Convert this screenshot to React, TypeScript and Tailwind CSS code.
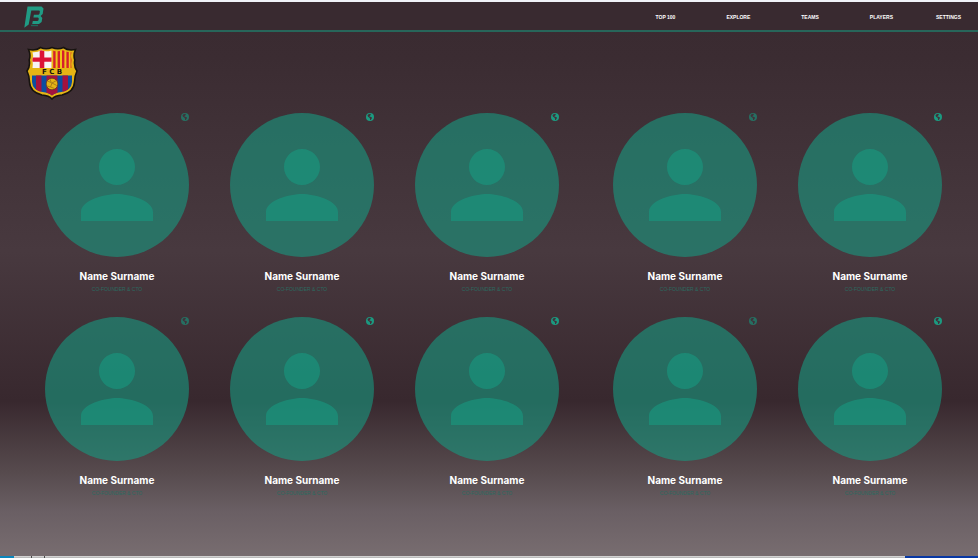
import React from "react";

const links = ["TOP 100", "EXPLORE", "TEAMS", "PLAYERS", "SETTINGS"];

type Player = { name: string; role: string; online: boolean };

const player = (online: boolean): Player => ({
  name: "Name Surname",
  role: "CO-FOUNDER & CTO",
  online,
});

const rows: Player[][][] = [
  [
    [player(false), player(true), player(true)],
    [player(false), player(true)],
  ],
  [
    [player(false), player(true), player(true)],
    [player(false), player(true)],
  ],
];

function Logo() {
  return (
    <svg viewBox="0 0 20 22" className="h-[22px] w-5" role="img" aria-label="Home">
      <path
        fill="#209b84"
        d="M3.5 0.5H17.5L19.5 2.5L18.7 8L16.6 10L18.3 12L17.6 16L15 18H8.2L8.8 15H13.6L14.5 14.2L14.8 12.4L14 11.6H9.4L9.9 8.7H14.6L15.5 7.8L15.9 5.2L15.2 4.4H7.3L4.7 18.6L0.3 21.7Z"
      />
      <path fill="#1f6659" d="M7 18.8H14V20.2H7Z" />
    </svg>
  );
}

function Crest() {
  const outline =
    "M2.5 3.5Q10 5 14.5 1.5Q20 4 26 1.5Q32 4 37.5 1.5Q42 5 49.5 3.5Q47 9 48.8 14Q47.5 20 51 25Q48.5 30 48.5 36Q48 46 36 49Q29 49.5 26 53Q23 49.5 16 49Q4 46 3.5 36Q3.5 30 1 25Q4.5 20 3.2 14Q5 9 2.5 3.5Z";
  return (
    <svg viewBox="0 0 52 54" className="h-[54px] w-[52px]" role="img" aria-label="FCB">
      <defs>
        <clipPath id="crest-cross">
          <path d="M6.5 6.2Q12 6.5 15 4.2Q20 6.2 25.5 4.4V22H6.5Q7.2 18 6.4 14Q8 10 6.5 6.2Z" />
        </clipPath>
        <clipPath id="crest-bars">
          <path d="M26.5 4.4Q32 6.2 37 4.2Q41 6.5 45.5 6.2Q44 10 45.6 14Q44.8 18 45.5 22H26.5Z" />
        </clipPath>
        <clipPath id="crest-base">
          <path d="M6 29.5H46V36Q45.5 44 35.5 46Q29 46.5 26 49.5Q23 46.5 16.5 46Q6.5 44 6 36Z" />
        </clipPath>
      </defs>
      <path d={outline} fill="#e5b414" stroke="#17130f" strokeWidth="1.6" />
      <g clipPath="url(#crest-cross)">
        <path fill="#f7f4f5" d="M5 3H26V22H5Z" />
        <path fill="#dc1236" d="M13.7 3H18.3V22H13.7ZM5 11.5H26V15.8H5Z" />
      </g>
      <g clipPath="url(#crest-bars)">
        <path fill="#f0c419" d="M26 3H47V22H26Z" />
        <path fill="#d5202c" d="M27.2 3H29.6V22H27.2ZM31.6 3H34V22H31.6ZM36 3H38.4V22H36ZM40.4 3H42.8V22H40.4ZM44.6 3H47V22H44.6Z" />
      </g>
      <g clipPath="url(#crest-base)">
        <path fill="#0c4da0" d="M5 29H47V51H5Z" />
        <path fill="#a4123f" d="M10 29H15.5V51H10ZM20.5 29H31.5V51H20.5ZM36.5 29H42V51H36.5Z" />
      </g>
      <circle cx="26" cy="38" r="5.8" fill="#e5b414" stroke="#5b3a1c" strokeWidth="0.7" />
      <path fill="none" stroke="#9a7018" strokeWidth="0.8" d="M21.5 35L26 37L30.5 34.5M26 37L24.5 41L28.5 42.5M24.5 41L21 40M26 37L30.8 39.5M24 33.2L25 36" />
      <text x="26" y="27.8" textAnchor="middle" fontSize="7" fontWeight="700" fill="#17130f" fontFamily="'DejaVu Sans', sans-serif">
        F C B
      </text>
    </svg>
  );
}

function Globe({ online }: { online: boolean }) {
  return (
    <svg
      viewBox="0 0 16 16"
      aria-hidden="true"
      className={online ? "absolute top-0 right-0 size-2 text-[#1b9a80]" : "absolute top-0 right-0 size-2 text-[#266f62]"}
    >
      <circle cx="8" cy="8" r="8" fill="currentColor" />
      <path fill="#41323a" d="M4 3L8 1.5L10 3L8 5.5L6.5 7L9 7.5L12 9L11.5 11L9.5 14L8 14L8 11L6.5 9L4 7.5L3 5Z" />
    </svg>
  );
}

function PlayerCard({ name, role, online }: Player) {
  return (
    <article className="relative flex w-36 flex-col items-center">
      <div className="flex size-36 items-center justify-center rounded-full bg-[#179980]/60">
        <svg viewBox="0 0 24 24" className="size-[108px] fill-[#179980]/60" aria-hidden="true">
          <path d="M12 12c2.21 0 4-1.79 4-4s-1.79-4-4-4-4 1.79-4 4 1.79 4 4 4zm0 2c-2.67 0-8 1.34-8 4v2h16v-2c0-2.66-5.33-4-8-4z" />
        </svg>
      </div>
      <Globe online={online} />
      <h2 className="mt-[11px] font-['Inter',sans-serif] text-[10px] leading-4 font-bold text-white">{name}</h2>
      <p className="text-[5px] leading-[10px] text-[#2b6a60]">{role}</p>
    </article>
  );
}

export default function App() {
  return (
    <div className="flex min-h-screen flex-col bg-[#38292f] font-['Liberation_Sans',Arial,sans-serif]">
      <div className="h-0.5 bg-[#f1f3f8]" />
      <div className="flex grow flex-col bg-[linear-gradient(to_bottom,#392a30_0%,#3b2c32_10%,#48393f_45%,#38282e_72%,#574b4e_85%,#6a5f64_92%,#786d70_100%)]">
        <header className="flex h-[30px] items-center justify-between border-b-2 border-[#27665a] bg-[#392a30] pt-0.5 pr-[17px] pl-6">
          <a href="#home">
            <Logo />
          </a>
          <nav className="flex gap-[51px] text-[5px] leading-[10px] font-bold text-white">
            {links.map((label) => (
              <a key={label} href={"#" + label.toLowerCase().replace(" ", "-")} className="last:-ml-2">
                {label}
              </a>
            ))}
          </nav>
        </header>
        <main className="grow">
          <div className="px-[26px] pt-3.5">
            <Crest />
          </div>
          <div className="flex flex-col gap-[23px] pt-[13px] pr-9 pb-6 pl-[45px]">
            {rows.map((groups, r) => (
              <section key={r} className="flex flex-wrap justify-between gap-y-6">
                {groups.map((group, g) => (
                  <div key={g} className="flex flex-wrap gap-[41px]">
                    {group.map((p, i) => (
                      <PlayerCard key={i} {...p} />
                    ))}
                  </div>
                ))}
              </section>
            ))}
          </div>
        </main>
      </div>
      <footer className="flex h-0.5 bg-linear-to-b from-[#dedede] to-[#b0b0b0]">
        <div className="w-3.5 bg-[#0a86bd]" />
        <div className="ml-[17px] w-px bg-[#4a4a4a]" />
        <div className="ml-3 w-px bg-[#4a4a4a]" />
        <div className="ml-auto w-[73px] bg-[#0838a4]" />
      </footer>
    </div>
  );
}
